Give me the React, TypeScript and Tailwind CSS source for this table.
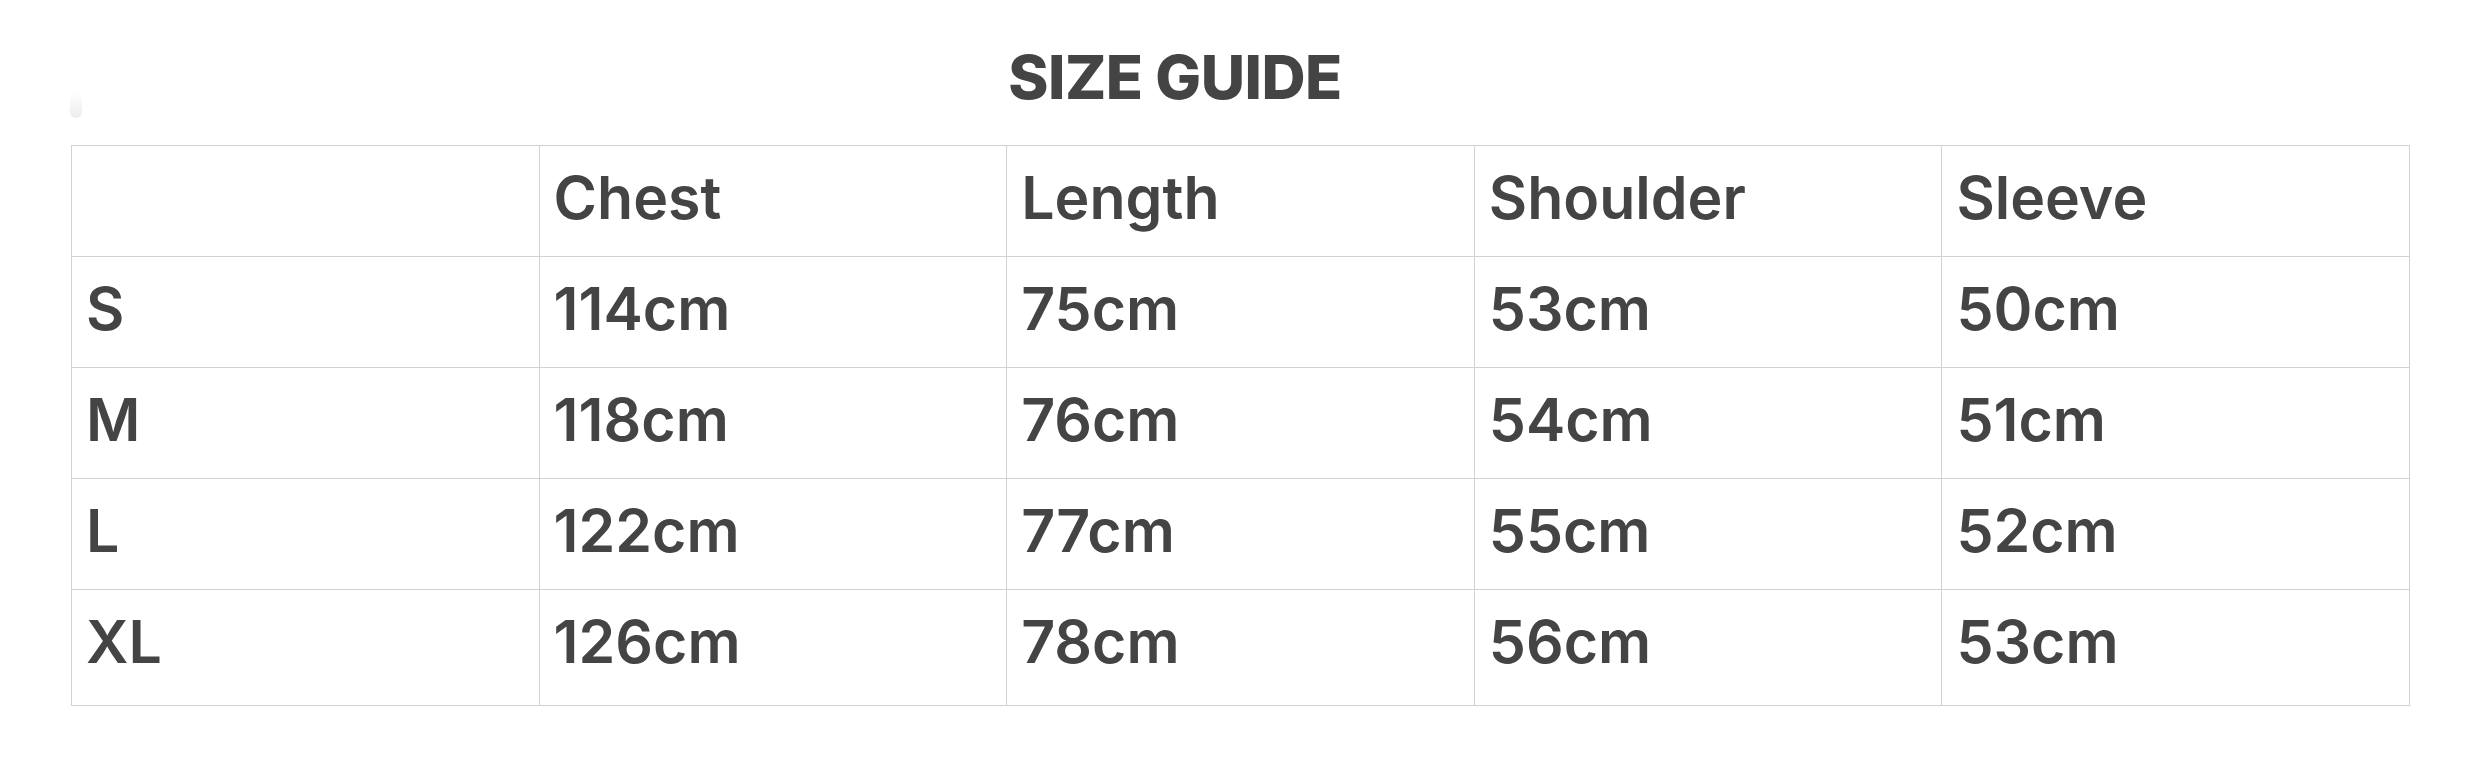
const headers = ["", "Chest", "Length", "Shoulder", "Sleeve"];

const rows: string[][] = [
  ["S", "114cm", "75cm", "53cm", "50cm"],
  ["M", "118cm", "76cm", "54cm", "51cm"],
  ["L", "122cm", "77cm", "55cm", "52cm"],
  ["XL", "126cm", "78cm", "56cm", "53cm"],
];

const cellClass =
  "border border-[#d2d2d2] align-top pl-[14px] pt-[22px] text-left font-semibold";

export default function App() {
  return (
    <div
      className="relative w-[2468px] h-[766px] bg-white text-[#444444]"
      style={{ fontFamily: "Inter, 'Liberation Sans', sans-serif" }}
    >
      {/* faint scroll nub on the left */}
      <div className="absolute left-[70px] top-[93px] w-[12px] h-[25px] rounded-b-full bg-gradient-to-b from-white to-[#ececec]" />

      <div className="pl-[71px] pt-[47px] h-[145px]">
        <h1 className="w-[2208px] text-center text-[61px] leading-none font-extrabold tracking-[-0.5px]">
          SIZE GUIDE
        </h1>
      </div>

      <div className="pl-[71px]">
        <table className="w-[2339px] table-fixed border-collapse text-[59px] leading-none">
          <thead>
            <tr className="h-[111px]">
              {headers.map((h, i) => (
                <th key={i} className={cellClass}>
                  {h}
                </th>
              ))}
            </tr>
          </thead>
          <tbody>
            {rows.map((r, ri) => (
              <tr key={r[0]} className={ri === rows.length - 1 ? "h-[116px]" : "h-[111px]"}>
                {r.map((c, ci) => (
                  <td key={ci} className={cellClass}>
                    {c}
                  </td>
                ))}
              </tr>
            ))}
          </tbody>
        </table>
      </div>
    </div>
  );
}
